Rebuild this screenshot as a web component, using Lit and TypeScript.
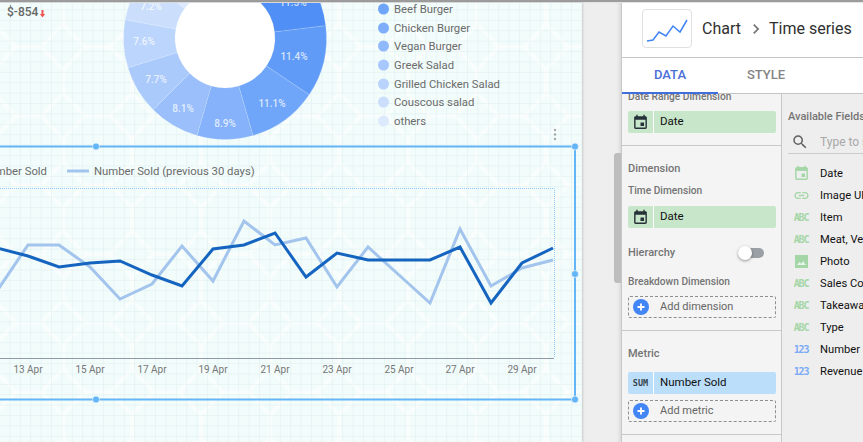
import { LitElement, css, html, svg } from 'lit'
import { customElement } from 'lit/decorators.js'

const CALENDAR = 'M17 12h-5v5h5v-5zM16 1v2H8V1H6v2H5c-1.11 0-1.99.9-1.99 2L3 19c0 1.1.89 2 2 2h14c1.1 0 2-.9 2-2V5c0-1.1-.9-2-2-2h-1V1h-2zm3 18H5V8h14v11z'
const LINK = 'M3.9 12c0-1.71 1.39-3.1 3.1-3.1h4V7H7c-2.76 0-5 2.24-5 5s2.24 5 5 5h4v-1.9H7c-1.71 0-3.1-1.39-3.1-3.1zM8 13h8v-2H8v2zm9-6h-4v1.9h4c1.71 0 3.1 1.39 3.1 3.1s-1.39 3.1-3.1 3.1h-4V17h4c2.76 0 5-2.24 5-5s-2.24-5-5-5z'
const SEARCH = 'M15.5 14h-.79l-.28-.27A6.47 6.47 0 0 0 16 9.5 6.5 6.5 0 1 0 9.5 16c1.61 0 3.09-.59 4.23-1.57l.27.28v.79l5 4.99L20.49 19l-4.99-5zm-6 0C7.01 14 5 11.99 5 9.5S7.01 5 9.5 5 14 7.01 14 9.5 11.99 14 9.5 14z'
const CHEVRON = 'M10 6L8.59 7.41 13.17 12l-4.58 4.59L10 18l6-6z'

// donut slices, angles in degrees clockwise from top
const slices = [
  { from: 0, to: 41.4, color: '#3f84f3', label: '' },
  { from: 41.4, to: 83, color: '#4f8ff6', label: '11.5%', x: 293, y: 2 },
  { from: 83, to: 124, color: '#609bf8', label: '11.4%', x: 294, y: 56 },
  { from: 124, to: 164, color: '#70a6f9', label: '11.1%', x: 272, y: 103 },
  { from: 164, to: 196, color: '#85b2fa', label: '8.9%', x: 225, y: 123 },
  { from: 196, to: 225, color: '#9abffb', label: '8.1%', x: 183, y: 108 },
  { from: 225, to: 253, color: '#abcafc', label: '7.7%', x: 156, y: 79 },
  { from: 253, to: 280.4, color: '#bcd5fd', label: '7.6%', x: 144, y: 41 },
  { from: 280.4, to: 306.4, color: '#cbdffd', label: '7.2%', x: 151, y: 6 },
  { from: 306.4, to: 360, color: '#dde9fe', label: '' }
]

const legend = [
  { name: 'Beef Burger', color: '#6ea5f9', y: 9 },
  { name: 'Chicken Burger', color: '#7eaefb', y: 28 },
  { name: 'Vegan Burger', color: '#90b9fb', y: 46 },
  { name: 'Greek Salad', color: '#a8c7fc', y: 65 },
  { name: 'Grilled Chicken Salad', color: '#bad3fc', y: 84 },
  { name: 'Couscous salad', color: '#cbdefc', y: 102 },
  { name: 'others', color: '#dde9fd', y: 121 }
]

const dayX = [-3, 28, 59, 90, 120, 152, 182, 213, 244, 275, 306, 337, 368, 399, 430, 460, 491, 522, 553]
const current = [248, 256, 267, 263, 261, 275, 286, 249, 245, 233, 277, 253, 260, 260, 260, 247, 303, 263, 248]
const previous = [291, 245, 245, 267, 299, 284, 246, 281, 221, 245, 238, 287, 247, 275, 303, 229, 286, 268, 260]
const ticks = [
  ['13 Apr', 28], ['15 Apr', 90], ['17 Apr', 152], ['19 Apr', 213], ['21 Apr', 275],
  ['23 Apr', 337], ['25 Apr', 399], ['27 Apr', 460], ['29 Apr', 522]
] as const
const handles = [[96, 146.5], [575, 146.5], [575, 274], [96, 399.5], [575, 399.5]]

const fields = [
  { kind: 'date', name: 'Date' },
  { kind: 'link', name: 'Image URL' },
  { kind: 'abc', name: 'Item' },
  { kind: 'abc', name: 'Meat, Vegetarian' },
  { kind: 'photo', name: 'Photo' },
  { kind: 'abc', name: 'Sales Count' },
  { kind: 'abc', name: 'Takeaway' },
  { kind: 'abc', name: 'Type' },
  { kind: 'num', name: 'Number Sold' },
  { kind: 'num', name: 'Revenue' }
]

const CX = 225
const CY = 38
const OUTER = 101.5
const INNER = 50

function polar(radius: number, deg: number) {
  const rad = (deg * Math.PI) / 180
  return `${(CX + radius * Math.sin(rad)).toFixed(2)} ${(CY - radius * Math.cos(rad)).toFixed(2)}`
}

function slicePath(from: number, to: number) {
  const large = to - from > 180 ? 1 : 0
  return `M${polar(OUTER, from)}A${OUTER} ${OUTER} 0 ${large} 1 ${polar(OUTER, to)}L${polar(INNER, to)}A${INNER} ${INNER} 0 ${large} 0 ${polar(INNER, from)}Z`
}

function linePoints(values: number[]) {
  return values.map((y, i) => `${dayX[i]},${y}`).join(' ')
}

@customElement('app-root')
export class AppRoot extends LitElement {
  render() {
    return html`
      <div class="topbar"></div>
      <div class="main">
        ${this.renderCanvas()}
        <div class="gutter"><div class="scrollbar"></div></div>
        <div class="panel">
          ${this.renderHeader()}
          <div class="tabs">
            <div class="tab active">DATA</div>
            <div class="tab">STYLE</div>
          </div>
          <div class="body">
            ${this.renderConfig()}
            ${this.renderFields()}
          </div>
        </div>
      </div>
    `
  }

  renderCanvas() {
    return html`
      <svg class="canvas" width="582" height="439" viewBox="0 3 582 439">
        <defs>
          <pattern id="lattice" width="69" height="69" x="-6" y="12.5" patternUnits="userSpaceOnUse">
            <path d="M0 0V12L22 34.5L0 57V69M69 0V12L47 34.5L69 57V69M22 34.5H47" fill="none" stroke="#fff" stroke-width="4" opacity=".6" />
          </pattern>
          <pattern id="grid" width="10.4" height="10.4" patternUnits="userSpaceOnUse">
            <path d="M10.4 0V10.4H0" fill="none" stroke="#e0eeee" stroke-width="1" />
          </pattern>
        </defs>
        <rect y="3" width="582" height="439" fill="#f1fcfb" />
        <rect y="3" width="582" height="439" fill="url(#lattice)" />
        <rect y="3" width="582" height="439" fill="url(#grid)" />

        <text class="score" x="7" y="16">$-854</text>
        <path d="M41.5 10h2v4h1.6l-2.6 3.4-2.6-3.4h1.6z" fill="#ef5350" />

        <circle cx=${CX} cy=${CY} r=${INNER} fill="#fff" />
        ${slices.map(s => svg`<path d=${slicePath(s.from, s.to)} fill=${s.color} stroke="#fff" stroke-opacity=".25" stroke-width=".5" />`)}
        ${slices.filter(s => s.label).map(s => svg`<text class="pct" x=${s.x!} y=${s.y! + 4} text-anchor="middle">${s.label}</text>`)}

        ${legend.map(l => svg`
          <circle cx="383.5" cy=${l.y} r="5.5" fill=${l.color} />
          <text class="legend" x="394" y=${l.y + 4}>${l.name}</text>
        `)}

        <circle cx="555" cy="130" r="1.2" fill="#a8a8a8" />
        <circle cx="555" cy="134.5" r="1.2" fill="#a8a8a8" />
        <circle cx="555" cy="139" r="1.2" fill="#a8a8a8" />

        <text class="legend" x="47" y="175" text-anchor="end">Number Sold</text>
        <line x1="67" x2="89" y1="171" y2="171" stroke="#a3c4ec" stroke-width="3" />
        <text class="legend" x="94" y="175">Number Sold (previous 30 days)</text>

        <path d="M0 188.5H554.5V358" fill="none" stroke="#90caf9" stroke-dasharray="1 1" />
        <line x1="0" x2="554" y1="358.5" y2="358.5" stroke="#8d9aa5" />
        <polyline points=${linePoints(previous)} fill="none" stroke="#a3c4ec" stroke-width="3" />
        <polyline points=${linePoints(current)} fill="none" stroke="#1565c0" stroke-width="3" />
        ${ticks.map(([label, x]) => svg`<text class="tick" x=${x} y="373" text-anchor="middle">${label}</text>`)}

        <path d="M0 146.5H575V399.5H0" fill="none" stroke="#64b5f6" stroke-width="2" />
        ${handles.map(([x, y]) => svg`<circle cx=${x} cy=${y} r="3.5" fill="#64b5f6" stroke="#fff" stroke-opacity=".6" />`)}
      </svg>
    `
  }

  renderHeader() {
    return html`
      <div class="header">
        <div class="chart-thumb">
          <svg width="50" height="39" viewBox="0 0 50 39">
            <polyline points="5,32 11,31 17,23 24,27 31,17 38,23 45,11" fill="none" stroke="#4285f4" stroke-width="1.5" />
          </svg>
        </div>
        <span class="crumb">Chart</span>
        <svg class="chevron" width="20" height="20" viewBox="0 0 24 24"><path d=${CHEVRON} /></svg>
        <span class="crumb">Time series</span>
      </div>
    `
  }

  renderChip(kind: 'date' | 'metric', name: string) {
    return html`
      <div class="chip ${kind}">
        <div class="chip-icon">
          ${kind === 'date'
            ? html`<svg width="17" height="17" viewBox="0 0 24 24"><path d=${CALENDAR} fill="#263238" /></svg>`
            : html`<span class="sum">SUM</span>`}
        </div>
        <div class="chip-name">${name}</div>
      </div>
    `
  }

  renderAdd(label: string) {
    return html`
      <div class="add">
        <svg width="16" height="16" viewBox="0 0 16 16">
          <circle cx="8" cy="8" r="8" fill="#4285f4" />
          <path d="M7.1 4.5h1.8v2.6h2.6v1.8H8.9v2.6H7.1V8.9H4.5V7.1h2.6z" fill="#fff" />
        </svg>
        <span>${label}</span>
      </div>
    `
  }

  renderConfig() {
    return html`
      <div class="config">
        <section class="clipped">
          <div class="sub">Date Range Dimension</div>
          <div class="gap8">${this.renderChip('date', 'Date')}</div>
        </section>
        <section>
          <div class="head">Dimension</div>
          <div class="sub gap8">Time Dimension</div>
          <div class="gap9">${this.renderChip('date', 'Date')}</div>
          <div class="head hierarchy">
            <span>Hierarchy</span>
            <span class="toggle"><span class="knob"></span></span>
          </div>
          <div class="sub breakdown">Breakdown Dimension</div>
          <div class="gap8">${this.renderAdd('Add dimension')}</div>
        </section>
        <section>
          <div class="head">Metric</div>
          <div class="gap12">${this.renderChip('metric', 'Number Sold')}</div>
          <div class="gap6">${this.renderAdd('Add metric')}</div>
        </section>
      </div>
    `
  }

  renderFieldIcon(kind: string) {
    if (kind === 'date') return html`<svg width="17" height="17" viewBox="0 0 24 24"><path d=${CALENDAR} fill="#a5d6a7" /><path d="M5 3h14v5H5z" fill="#a5d6a7" /></svg>`
    if (kind === 'link') return html`<svg width="17" height="17" viewBox="0 0 24 24"><path d=${LINK} fill="#a5d6a7" /></svg>`
    if (kind === 'photo') {
      return html`<svg width="13" height="13" viewBox="0 0 13 13">
        <rect width="13" height="13" fill="#a5d6a7" />
        <path d="M2 10l2.5-3 1.6 1.8L8 6.2 11 10z" fill="#e8f5e9" />
      </svg>`
    }
    return html`<span class="type ${kind}">${kind === 'abc' ? 'ABC' : '123'}</span>`
  }

  renderFields() {
    return html`
      <div class="fields">
        <div class="fields-title">Available Fields</div>
        <div class="search">
          <svg width="18" height="18" viewBox="0 0 24 24"><path d=${SEARCH} fill="#616161" /></svg>
          <span>Type to search</span>
        </div>
        <div class="field-list">
          ${fields.map(f => html`
            <div class="field">
              <div class="field-icon">${this.renderFieldIcon(f.kind)}</div>
              <span>${f.name}</span>
            </div>
          `)}
        </div>
      </div>
    `
  }

  static styles = css`
    :host {
      display: block;
      width: 863px;
      height: 442px;
      overflow: hidden;
      font-family: Roboto, "Noto Sans", sans-serif;
      background: #eee;
    }

    .topbar {
      height: 3px;
      box-sizing: border-box;
      background: #e4e4e4;
      border-top: 2px solid #9c9c9c;
    }

    .main {
      display: flex;
      height: 439px;
    }

    .canvas {
      display: block;
      flex: none;
      box-shadow: 1px 0 2px rgba(0, 0, 0, 0.15);
    }

    .canvas text {
      font-family: Roboto, sans-serif;
    }

    .score {
      font-size: 12px;
      font-weight: 500;
      fill: #666;
    }

    .pct {
      font-size: 10px;
      font-weight: 500;
      fill: #fff;
      fill-opacity: 0.75;
    }

    .legend {
      font-size: 11.3px;
      fill: #6b6b6b;
    }

    .tick {
      font-size: 10px;
      fill: #777;
    }

    .gutter {
      flex: none;
      width: 39px;
      position: relative;
      box-shadow: inset -4px 0 4px -3px rgba(0, 0, 0, 0.12);
    }

    .scrollbar {
      position: absolute;
      right: 0;
      top: 150px;
      width: 7px;
      height: 130px;
      border-radius: 3px 0 0 3px;
      background: #bdbdbd;
    }

    .panel {
      flex: none;
      width: 242px;
      box-sizing: border-box;
      border-left: 1px solid #c8c8c8;
      display: flex;
      flex-direction: column;
      background: #fff;
    }

    .header {
      height: 54px;
      flex: none;
      box-sizing: border-box;
      display: flex;
      align-items: center;
      padding: 0 0 3px 20px;
    }

    .chart-thumb {
      width: 50px;
      height: 39px;
      box-sizing: border-box;
      border: 1px solid #e0e0e0;
      border-radius: 4px;
      margin-right: 10px;
      overflow: hidden;
    }

    .chart-thumb svg {
      display: block;
      margin: -1px;
    }

    .crumb {
      font-size: 16px;
      color: #303030;
      white-space: nowrap;
    }

    .chevron {
      margin: 0 3px 0 5px;
      fill: #757575;
      flex: none;
    }

    .tabs {
      height: 37px;
      flex: none;
      box-sizing: border-box;
      display: flex;
      border-top: 1px solid #c4c4c4;
      border-bottom: 1px solid #c4c4c4;
    }

    .tab {
      width: 96px;
      text-align: center;
      font-size: 13px;
      font-weight: 500;
      line-height: 34px;
      color: #858585;
      box-sizing: border-box;
    }

    .tab.active {
      color: #4a6fd8;
      border-bottom: 2px solid #3f6fdc;
      height: 36px;
    }

    .body {
      flex: 1;
      min-height: 0;
      display: flex;
      overflow: hidden;
    }

    .config {
      flex: none;
      width: 160px;
      box-sizing: border-box;
      background: #f4f4f4;
      border-right: 1px solid #c8c8c8;
    }

    section {
      padding: 15px 5px 12px 6px;
      border-bottom: 1px solid #c8c8c8;
    }

    section.clipped {
      padding-top: 0;
      margin-top: -5px;
    }

    .head,
    .sub {
      color: #757575;
      line-height: 14px;
      white-space: nowrap;
      padding-top: 1px;
      margin-bottom: -1px;
    }

    .head {
      font-size: 11px;
      font-weight: 500;
    }

    .sub {
      font-size: 10.2px;
      font-weight: 500;
    }

    .gap6 { margin-top: 6px; }
    .gap8 { margin-top: 8px; }
    .gap9 { margin-top: 9px; }
    .gap12 { margin-top: 12px; }

    .hierarchy {
      margin-top: 17px;
      display: flex;
      justify-content: space-between;
      align-items: center;
    }

    .breakdown {
      margin-top: 15px;
    }

    .toggle {
      position: relative;
      width: 17px;
      height: 10px;
      margin-right: 12px;
      border-radius: 5px;
      background: #9aa0a6;
    }

    .knob {
      position: absolute;
      left: -9px;
      top: -2px;
      width: 14px;
      height: 14px;
      border-radius: 50%;
      background: #fff;
      box-shadow: 0 1px 3px rgba(0, 0, 0, 0.4);
    }

    .chip {
      display: flex;
      height: 22px;
      border-radius: 2px;
      overflow: hidden;
      font-size: 11.5px;
      color: #111;
    }

    .chip.date { background: #c8e6c9; }
    .chip.metric { background: #bbdefb; }

    .chip-icon {
      width: 25px;
      flex: none;
      display: flex;
      align-items: center;
      justify-content: center;
      border-right: 1px solid #fff;
    }

    .chip-name {
      padding-left: 6px;
      line-height: 21px;
    }

    .sum {
      font-family: "DejaVu Sans Mono", monospace;
      font-size: 8.5px;
      font-weight: 700;
      color: #37474f;
    }

    .add {
      display: flex;
      align-items: center;
      height: 22px;
      box-sizing: border-box;
      border: 1px dashed #8f8f8f;
      border-radius: 2px;
      padding-left: 4px;
      font-size: 11px;
      line-height: 18px;
      color: #666;
    }

    .add svg {
      flex: none;
    }

    .add span {
      margin: -1px 0 0 11px;
    }

    .fields {
      flex: 1;
      min-width: 0;
      background: #eee;
      white-space: nowrap;
      overflow: hidden;
    }

    .fields-title {
      margin: 16px 0 0 6px;
      font-size: 11px;
      font-weight: 500;
      line-height: 14px;
      color: #757575;
    }

    .search {
      margin: 6px 0 0 6px;
      height: 24px;
      box-sizing: border-box;
      display: flex;
      align-items: center;
      padding-left: 3px;
      border-bottom: 1px solid #ccc;
      font-size: 12px;
      color: #a8a8a8;
    }

    .search svg {
      flex: none;
    }

    .search span {
      margin-left: 11px;
    }

    .field-list {
      margin-top: 8px;
    }

    .field {
      display: flex;
      align-items: center;
      height: 22px;
      font-size: 11.2px;
      color: #111;
    }

    .field-icon {
      width: 38px;
      flex: none;
      display: flex;
      justify-content: center;
    }

    .type {
      font-family: "DejaVu Sans Mono", monospace;
      font-size: 10px;
      font-weight: 700;
      letter-spacing: -1.2px;
    }

    .type.abc { color: #a5d6a7; }
    .type.num { color: #7baaf7; }
  `
}
